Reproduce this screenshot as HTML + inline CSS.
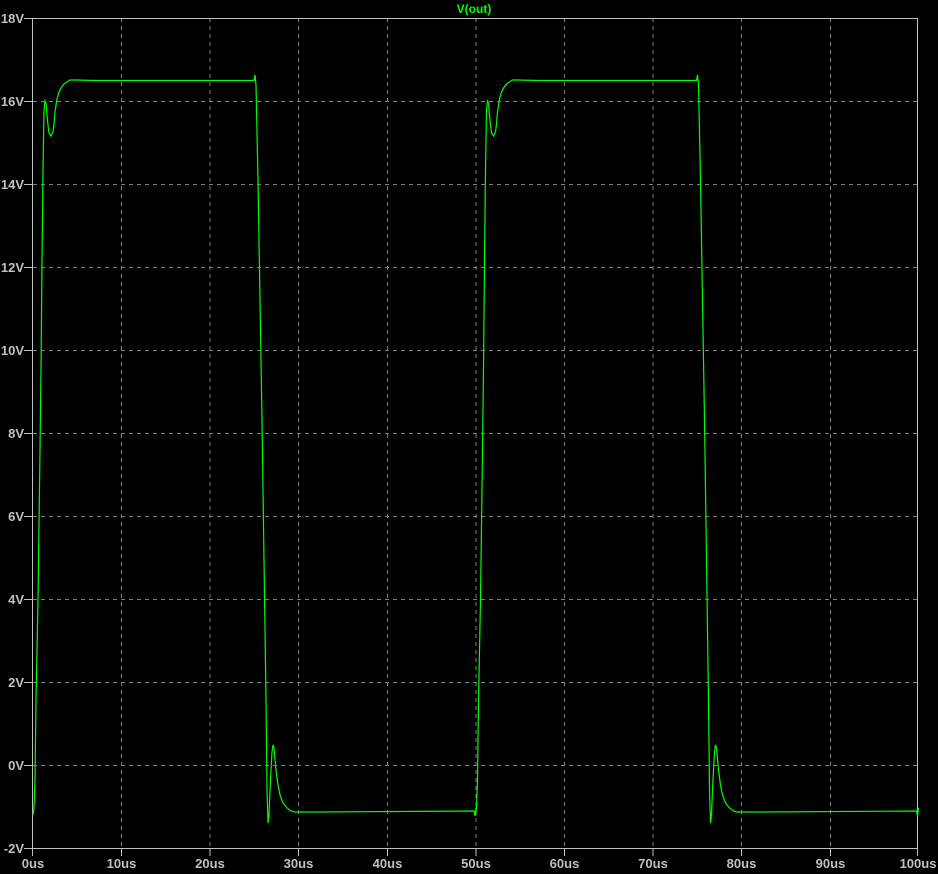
<!DOCTYPE html>
<html><head><style>
html,body{margin:0;padding:0;background:#000;}
svg{display:block}
text{font-family:"Liberation Sans",sans-serif;font-weight:bold;font-size:13px;fill:#c0c0c0}
</style></head><body>
<svg width="938" height="874" viewBox="0 0 938 874">
<rect width="938" height="874" fill="#000"/>
<g stroke="#808080" stroke-width="1" stroke-dasharray="4,4" shape-rendering="crispEdges">
<path d="M121.5 18V848M210 18V848M298.5 18V848M387.5 18V848M476 18V848M564.5 18V848M653 18V848M741.5 18V848M830.5 18V848"/>
<path d="M33 101.5H918M33 184.5H918M33 267.5H918M33 350.5H918M33 433.5H918M33 516.5H918M33 599.5H918M33 682.5H918M33 765.5H918"/>
</g>
<g stroke="#c0c0c0" stroke-width="1" shape-rendering="crispEdges" fill="none">
<rect x="32.5" y="18.5" width="885" height="830"/>
<path d="M24 18.5H32M24 101.5H32M24 184.5H32M24 267.5H32M24 350.5H32M24 433.5H32M24 516.5H32M24 599.5H32M24 682.5H32M24 765.5H32M24 848.5H32"/>
<path d="M32.5 849V856M121.5 849V856M210 849V856M298.5 849V856M387.5 849V856M476 849V856M564.5 849V856M653 849V856M741.5 849V856M830.5 849V856M917.5 849V856"/>
</g>
<g text-anchor="end">
<text x="24" y="23">18V</text><text x="24" y="106">16V</text><text x="24" y="189">14V</text><text x="24" y="272">12V</text><text x="24" y="355">10V</text><text x="24" y="438">8V</text><text x="24" y="521">6V</text><text x="24" y="604">4V</text><text x="24" y="687">2V</text><text x="24" y="770">0V</text><text x="24" y="853">-2V</text>
</g>
<g text-anchor="middle">
<text x="33" y="868">0us</text><text x="121.5" y="868">10us</text><text x="210" y="868">20us</text><text x="298.5" y="868">30us</text><text x="387.5" y="868">40us</text><text x="476" y="868">50us</text><text x="564.5" y="868">60us</text><text x="653" y="868">70us</text><text x="741.5" y="868">80us</text><text x="830.5" y="868">90us</text><text x="918" y="868">100us</text>
</g>
<text x="474" y="13" text-anchor="middle" style="fill:#00ff00;font-size:12px">V(out)</text>
<g fill="none" stroke="#00ff00" stroke-width="1.2">
<path id="w" d="M33 815L34 808L35 780L36 700L38 600L40 450L41 370L42 260L43 170L44 110L45 101L46 103L47 115L48 125L49 133L51 136L53 132L54 124L55 112L57 99L59 92L61 88L64 84L67 82L70 80L75 80L97 80.5L254 80.5L255 75L256 85L258 180L260 300L262 420L264 560L266 700L267 790L268 823L269 815L270 790L271 770L272 752L273 745L274 748L276 770L278 785L280 795L283 803L287 808L291 811L295 812L316 812L474 811L475 816L476 808"/>
<use href="#w" transform="translate(442.5 0)"/>
<path d="M918 811.5L918 811.5"/>
</g>
</svg>
</body></html>
